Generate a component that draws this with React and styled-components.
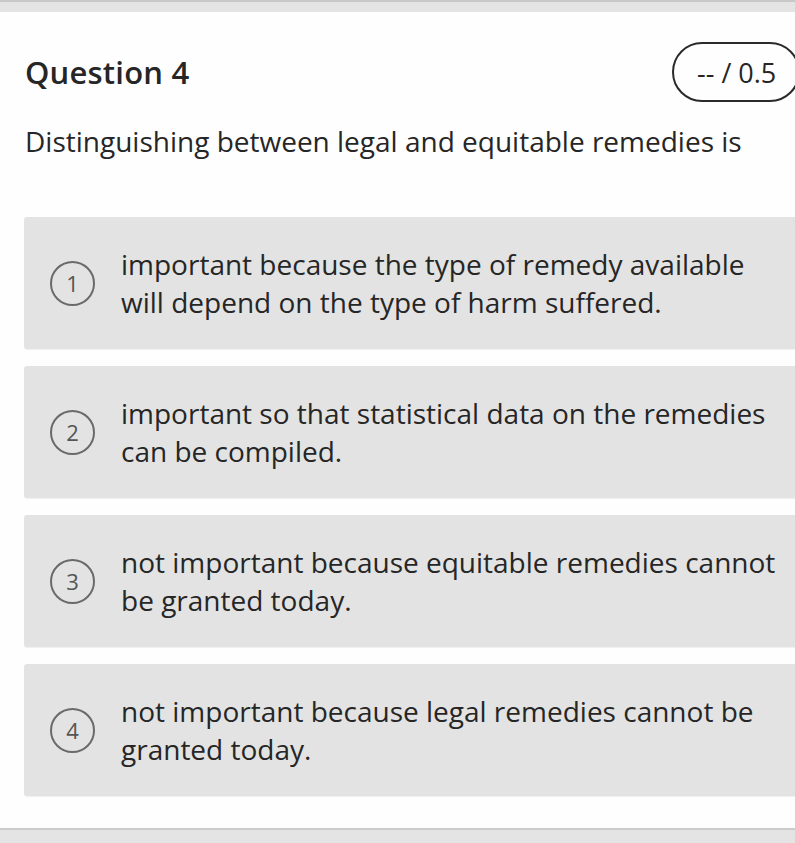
import React from 'react'
import styled, { createGlobalStyle } from 'styled-components'

const options = [
  'important because the type of remedy available will depend on the type of harm suffered.',
  'important so that statistical data on the remedies can be compiled.',
  'not important because equitable remedies cannot be granted today.',
  'not important because legal remedies cannot be granted today.',
]

function App() {
  return (
    <>
      <GlobalStyle />
      <Page>
        <TopBar />
        <Card>
          <Header>
            <Title>Question 4</Title>
            <Score>-- / 0.5</Score>
          </Header>
          <Prompt>Distinguishing between legal and equitable remedies is</Prompt>
          <Options>
            {options.map((text, i) => (
              <Option key={i}>
                <Badge>{i + 1}</Badge>
                <OptionText>{text}</OptionText>
              </Option>
            ))}
          </Options>
        </Card>
        <BottomBar />
      </Page>
    </>
  )
}

export default App

const GlobalStyle = createGlobalStyle`
  html, body {
    margin: 0;
    padding: 0;
    background: #e4e4e4;
    overflow: hidden;
  }
  body {
    font-family: "Open Sans", "Noto Sans", sans-serif;
    color: #262626;
  }
`

const Page = styled.div`
  width: 820px;
  display: flex;
  flex-direction: column;
`

const TopBar = styled.div`
  height: 12px;
  background: #e4e4e4;
  border-top: 2px solid #c8c8c8;
  box-sizing: border-box;
`

const BottomBar = styled.div`
  height: 14px;
  background: #e4e4e4;
  border-top: 2px solid #cbcbcb;
`

const Card = styled.div`
  background: #fefefe;
  padding: 30px 20px 32px 24px;
  display: flex;
  flex-direction: column;
`

const Header = styled.div`
  display: flex;
  justify-content: space-between;
  align-items: center;
  height: 60px;
`

const Title = styled.h2`
  margin: 0 0 0 1px;
  font-size: 31px;
  font-weight: 600;
  color: #262626;
  letter-spacing: 0.2px;
`

const Score = styled.div`
  box-sizing: border-box;
  width: 128px;
  height: 60px;
  border: 2px solid #2a2a2a;
  border-radius: 30px;
  display: flex;
  align-items: center;
  padding-left: 23px;
  font-size: 27px;
  color: #262626;
`

const Prompt = styled.p`
  margin: 20px 0 0 1px;
  font-size: 28px;
  line-height: 38px;
  color: #262626;
`

const Options = styled.div`
  margin-top: 57px;
  display: flex;
  flex-direction: column;
  gap: 17px;
`

const Option = styled.div`
  height: 132px;
  box-sizing: border-box;
  background: #e3e3e3;
  border-radius: 3px;
  box-shadow: 0 1px 1px rgba(0, 0, 0, 0.06);
  display: flex;
  align-items: center;
  padding-left: 26px;
  gap: 26px;
`

const Badge = styled.div`
  box-sizing: border-box;
  width: 45px;
  height: 45px;
  flex: none;
  border: 2px solid #6a6a6a;
  border-radius: 50%;
  display: flex;
  align-items: center;
  justify-content: center;
  font-size: 22px;
  color: #555;
`

const OptionText = styled.div`
  width: 660px;
  font-size: 28px;
  line-height: 38px;
  color: #262626;
`
